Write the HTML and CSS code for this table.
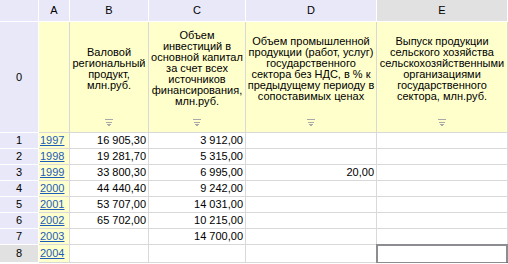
FILE: index.html
```html
<!DOCTYPE html>
<html>
<head>
<meta charset="utf-8">
<link rel="stylesheet" href="styles.css">
</head>
<body>
<table class="sheet">
  <colgroup>
    <col class="c-rh"><col class="c-a"><col class="c-b"><col class="c-c"><col class="c-d"><col class="c-e">
  </colgroup>
  <tr class="colhead">
    <td class="corner"></td>
    <td>A</td><td>B</td><td>C</td><td>D</td><td class="sel-head">E</td>
  </tr>
  <tr class="hrow">
    <td class="rh">0</td>
    <td class="ycell"></td>
    <td class="ycell"><div class="hc"><div class="ht">Валовой<br>региональный<br>продукт,<br>млн.руб.</div><div class="hf"><svg width="8" height="7" viewBox="0 0 8 7"><rect x="0" y="0" width="8" height="1"/><rect x="1" y="3" width="6" height="1"/><rect x="2" y="5" width="4" height="1"/><rect x="3" y="6" width="2" height="1"/></svg></div></div></td>
    <td class="ycell"><div class="hc"><div class="ht">Объем<br>инвестиций в<br>основной капитал<br>за счет всех<br>источников<br>финансирования,<br>млн.руб.</div><div class="hf"><svg width="8" height="7" viewBox="0 0 8 7"><rect x="0" y="0" width="8" height="1"/><rect x="1" y="3" width="6" height="1"/><rect x="2" y="5" width="4" height="1"/><rect x="3" y="6" width="2" height="1"/></svg></div></div></td>
    <td class="ycell"><div class="hc"><div class="ht">Объем промышленной<br>продукции (работ, услуг)<br>государственного<br>сектора без НДС, в % к<br>предыдущему периоду в<br>сопоставимых ценах</div><div class="hf"><svg width="8" height="7" viewBox="0 0 8 7"><rect x="0" y="0" width="8" height="1"/><rect x="1" y="3" width="6" height="1"/><rect x="2" y="5" width="4" height="1"/><rect x="3" y="6" width="2" height="1"/></svg></div></div></td>
    <td class="ycell"><div class="hc"><div class="ht">Выпуск продукции<br>сельского хозяйства<br>сельскохозяйственными<br>организациями<br>государственного<br>сектора, млн.руб.</div><div class="hf"><svg width="8" height="7" viewBox="0 0 8 7"><rect x="0" y="0" width="8" height="1"/><rect x="1" y="3" width="6" height="1"/><rect x="2" y="5" width="4" height="1"/><rect x="3" y="6" width="2" height="1"/></svg></div></div></td>
  </tr>
  <tr class="drow"><td class="rh">1</td><td class="acell"><a href="#">1997</a></td><td class="num">16 905,30</td><td class="num">3 912,00</td><td class="num"></td><td class="num"></td></tr>
  <tr class="drow"><td class="rh">2</td><td class="acell"><a href="#">1998</a></td><td class="num">19 281,70</td><td class="num">5 315,00</td><td class="num"></td><td class="num"></td></tr>
  <tr class="drow"><td class="rh">3</td><td class="acell"><a href="#">1999</a></td><td class="num">33 800,30</td><td class="num">6 995,00</td><td class="num">20,00</td><td class="num"></td></tr>
  <tr class="drow"><td class="rh">4</td><td class="acell"><a href="#">2000</a></td><td class="num">44 440,40</td><td class="num">9 242,00</td><td class="num"></td><td class="num"></td></tr>
  <tr class="drow"><td class="rh">5</td><td class="acell"><a href="#">2001</a></td><td class="num">53 707,00</td><td class="num">14 031,00</td><td class="num"></td><td class="num"></td></tr>
  <tr class="drow"><td class="rh">6</td><td class="acell"><a href="#">2002</a></td><td class="num">65 702,00</td><td class="num">10 215,00</td><td class="num"></td><td class="num"></td></tr>
  <tr class="drow"><td class="rh">7</td><td class="acell"><a href="#">2003</a></td><td class="num"></td><td class="num">14 700,00</td><td class="num"></td><td class="num"></td></tr>
  <tr class="drow last"><td class="rh sel-rh">8</td><td class="acell"><a href="#">2004</a></td><td class="num"></td><td class="num"></td><td class="num"></td><td class="num selected"></td></tr>
</table>
</body>
</html>
```

FILE: styles.css
```css
html, body {
  margin: 0;
  padding: 0;
  background: #ffffff;
  overflow: hidden;
}
body {
  font-family: "Liberation Sans", Arial, sans-serif;
  font-size: 11px;
  color: #000;
}
.sheet {
  table-layout: fixed;
  border-collapse: separate;
  border-spacing: 0;
  width: 508px;
}
.c-rh { width: 39px; }
.c-a { width: 31px; }
.c-b { width: 79px; }
.c-c { width: 97px; }
.c-d { width: 131px; }
.c-e { width: 131px; }
.sheet td {
  padding: 0;
  border-right: 1px solid #d9d9d9;
  border-bottom: 1px solid #d9d9d9;
  line-height: 15px;
  overflow: hidden;
  white-space: nowrap;
}
.colhead td {
  height: 21px;
  background: #e8e8f8;
  text-align: center;
  vertical-align: middle;
  border-right-color: #ffffff;
  border-bottom-color: #ffffff;
}
.colhead td.sel-head {
  background: #e1e1e1;
}
.sheet td.rh {
  background: #e8e8f8;
  text-align: center;
  vertical-align: middle;
  border-right-color: #ffffff;
  border-bottom-color: #ffffff;
}
.sheet td.sel-rh {
  background: #e1e1e1;
}
.hrow td {
  height: 110px;
}
.hrow td.ycell {
  background: #ffffcc;
  vertical-align: top;
}
.hc {
  height: 110px;
  display: flex;
  flex-direction: column;
}
.ht {
  flex: 1;
  display: flex;
  align-items: center;
  justify-content: center;
  text-align: center;
  line-height: 11px;
  padding-top: 1px;
}
.hf {
  height: 18px;
  display: flex;
  justify-content: center;
  align-items: flex-start;
  padding-top: 5px;
  box-sizing: border-box;
}
.hf svg {
  display: block;
  fill: #a9a9a9;
}
.drow td {
  height: 15px;
  vertical-align: middle;
}
.drow.last td {
  height: 17px;
}
.sheet td.acell {
  background: #ffffcc;
  padding-left: 1px;
}
.acell a {
  color: #1d5cb9;
  text-decoration: underline;
}
.sheet td.num {
  text-align: right;
  padding-right: 2px;
}
.sheet td.selected {
  position: relative;
  overflow: visible;
}
.selected::after {
  content: "";
  position: absolute;
  left: -1px;
  top: -1px;
  right: -1px;
  bottom: -2px;
  border: 2px solid #8b8d90;
}
.selected::before {
  content: "";
  position: absolute;
  right: -2px;
  bottom: -3px;
  width: 3px;
  height: 3px;
  background: #6f7174;
  z-index: 1;
}
```
